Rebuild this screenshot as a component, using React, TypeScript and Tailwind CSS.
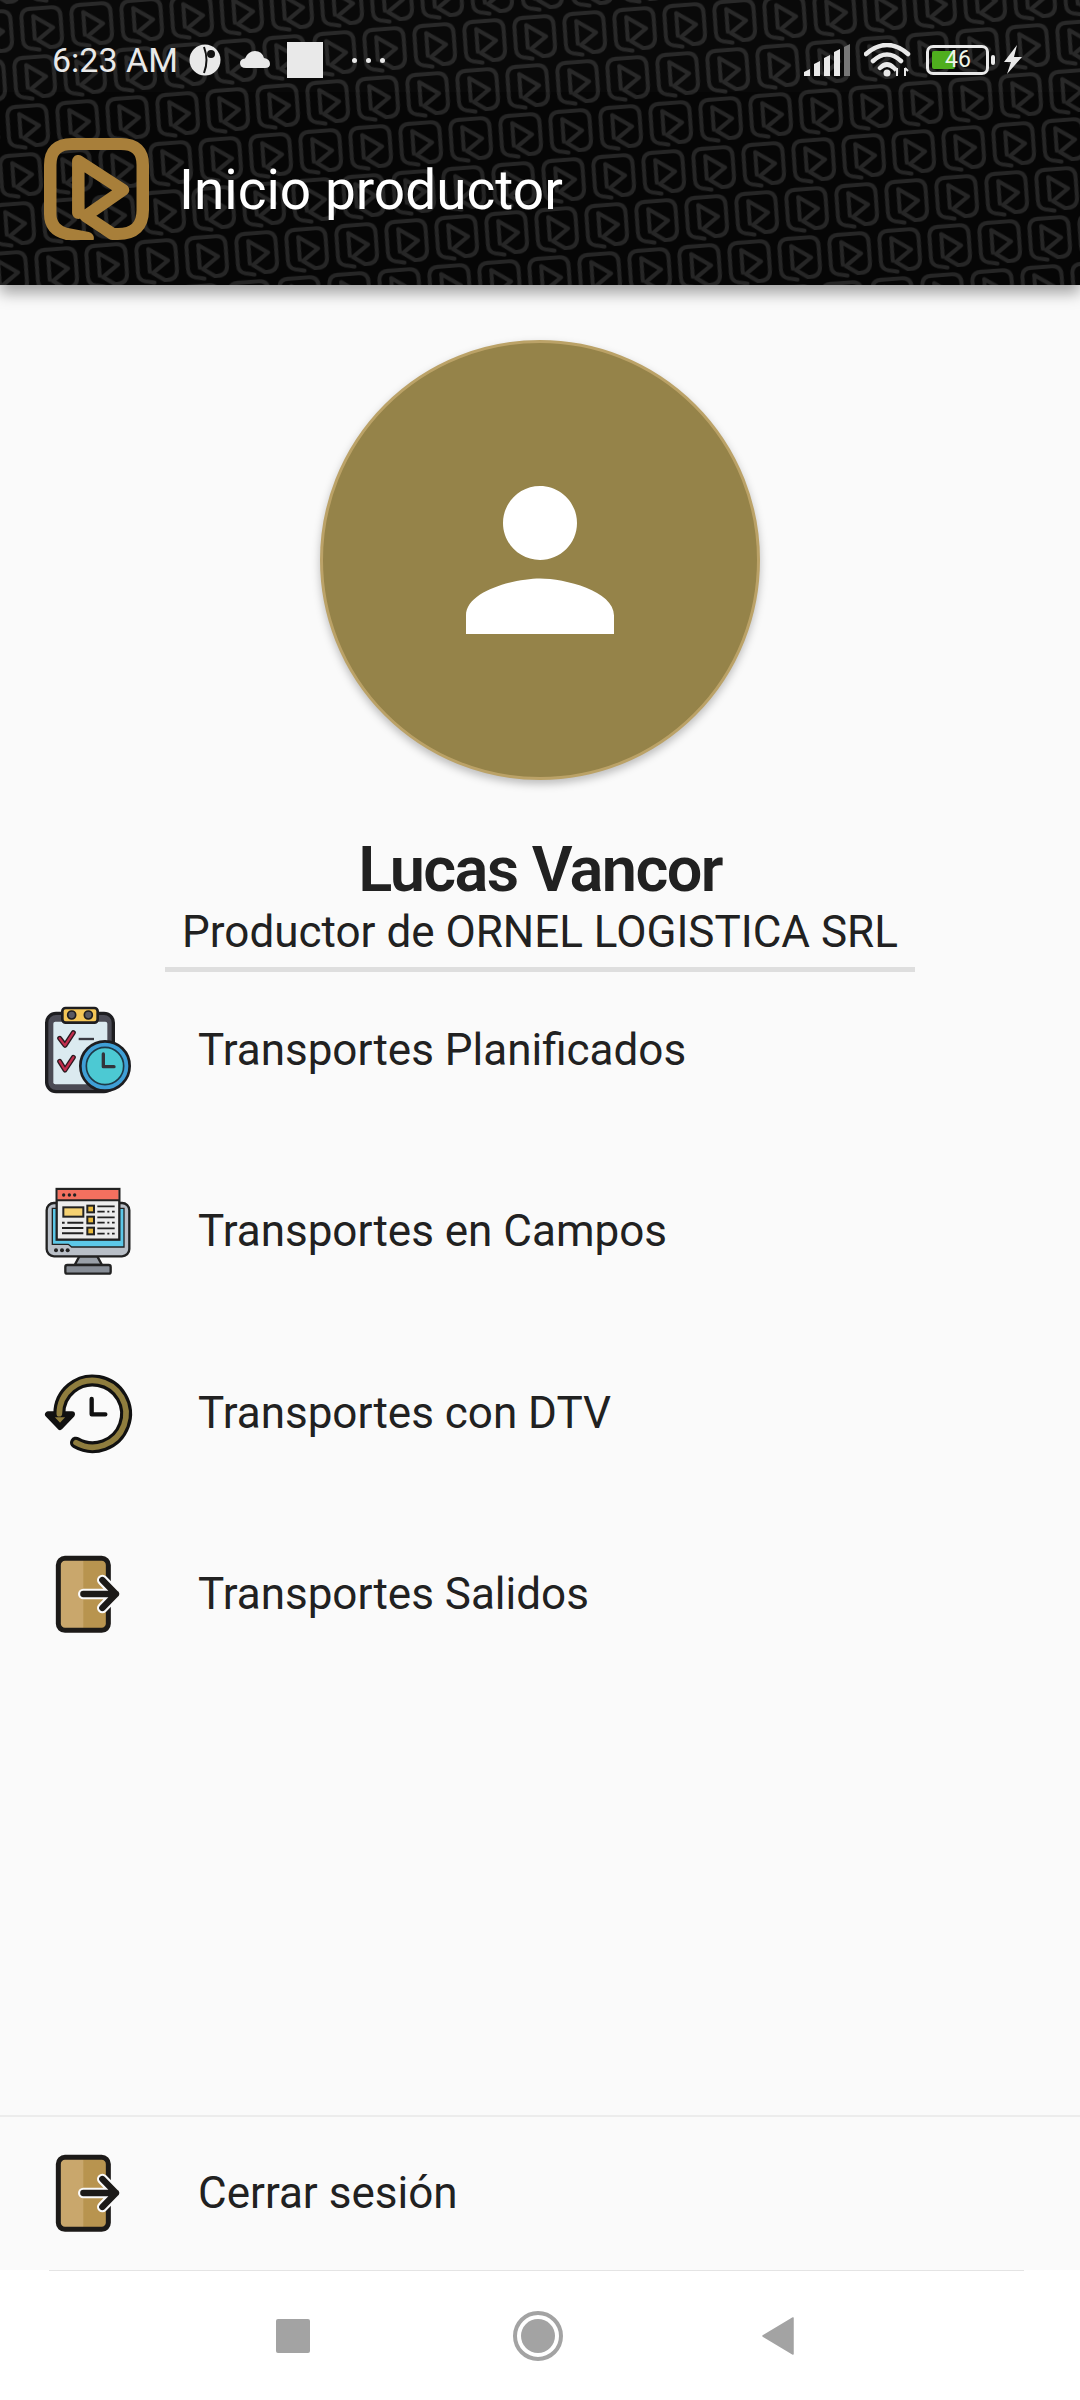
const LOGO_PATH = 'M42 100 L22 96 Q6 92 6 76 V27 Q6 6 27 6 H74 Q95 6 95 27 V72 Q95 96 71 96 H66 L40 78 L76 52 L33 23 V75';

function ClipboardIcon() {
  return (
    <svg viewBox="0 0 420 420" className="w-[140px] h-[140px] shrink-0">
      <rect x="80" y="100" width="200" height="235" rx="28" fill="#4b4b55" stroke="#1d1d20" strokeWidth="10" />
      <rect x="100" y="125" width="162" height="188" rx="6" fill="#dbeaf0" />
      <rect x="127" y="84" width="106" height="44" rx="10" fill="#f4c656" stroke="#1d1d20" strokeWidth="8" />
      <circle cx="155" cy="105" r="12" fill="#5a5a62" stroke="#1d1d20" strokeWidth="5" />
      <circle cx="205" cy="105" r="12" fill="#5a5a62" stroke="#1d1d20" strokeWidth="5" />
      <path d="M119 175 L135 196 L160 158 M119 244 L135 270 L160 232" fill="none" stroke="#2a1a20" strokeWidth="15" strokeLinecap="round" strokeLinejoin="round" />
      <path d="M119 175 L135 196 L160 158 M119 244 L135 270 L160 232" fill="none" stroke="#c22d4d" strokeWidth="7" strokeLinecap="round" strokeLinejoin="round" />
      <path d="M176 177 H222" stroke="#3a3a42" strokeWidth="7" />
      <circle cx="255" cy="258" r="74" fill="#3f9fd6" stroke="#1d1d20" strokeWidth="8" />
      <circle cx="255" cy="258" r="56" fill="#4cc9d3" stroke="#1d3a48" strokeWidth="5" />
      <path d="M250 222 V260 H282" fill="none" stroke="#33333a" strokeWidth="10" strokeLinecap="round" strokeLinejoin="round" />
    </svg>
  );
}

function MonitorIcon() {
  return (
    <svg viewBox="0 4 420 420" className="w-[140px] h-[140px] shrink-0">
      <path d="M178 290 H232 L246 316 H164 Z" fill="#9aa0a8" stroke="#222" strokeWidth="7" strokeLinejoin="round" />
      <rect x="136" y="316" width="136" height="26" rx="6" fill="#878d96" stroke="#222" strokeWidth="7" />
      <rect x="80" y="130" width="248" height="160" rx="22" fill="#b9bfc7" stroke="#222" strokeWidth="7" />
      <path d="M97 146 H312 V262 H155 L145 254 H97 Z" fill="#5cc8e8" stroke="#222" strokeWidth="4" />
      <circle cx="108" cy="272" r="6" fill="#222" />
      <circle cx="126" cy="272" r="6" fill="#222" />
      <circle cx="143" cy="272" r="6" fill="#222" />
      <rect x="110" y="88" width="188" height="152" fill="#ececec" stroke="#222" strokeWidth="7" />
      <rect x="113" y="91" width="182" height="31" fill="#f4705f" />
      <path d="M110 122 H298" stroke="#222" strokeWidth="6" />
      <circle cx="131" cy="106" r="5" fill="#222" />
      <circle cx="148" cy="106" r="5" fill="#222" />
      <circle cx="164" cy="106" r="5" fill="#222" />
      <rect x="130" y="143" width="60" height="28" fill="#f6d272" stroke="#222" strokeWidth="6" />
      <rect x="202" y="138" width="20" height="20" fill="#e8b93c" stroke="#222" strokeWidth="6" />
      <rect x="202" y="171" width="20" height="20" fill="#e8b93c" stroke="#222" strokeWidth="6" />
      <rect x="202" y="204" width="20" height="20" fill="#e8b93c" stroke="#222" strokeWidth="6" />
      <path d="M232 156 H254 M262 156 H268 M276 156 H284 M232 189 H254 M262 189 H268 M276 189 H284 M232 222 H254 M262 222 H268 M276 222 H284 M232 140 H284 M232 173 H284 M232 206 H284" stroke="#222" strokeWidth="5" />
      <path d="M126 189 H134 M142 189 H190 M126 205 H190 M126 221 H190" stroke="#222" strokeWidth="6" />
    </svg>
  );
}

function HistoryIcon() {
  return (
    <svg viewBox="0 6 420 420" className="w-[140px] h-[140px] shrink-0">
      <path d="M168 305 A100 100 0 1 0 118 218" fill="none" stroke="#111" strokeWidth="36" strokeLinecap="round" />
      <path d="M84 220 H156 L120 258 Z" fill="#8f7d3e" stroke="#111" strokeWidth="18" strokeLinejoin="round" />
      <path d="M168 305 A100 100 0 1 0 118 218" fill="none" stroke="#8f7d3e" strokeWidth="17" strokeLinecap="round" />
      <path d="M215 174 V220 H256" fill="none" stroke="#111" strokeWidth="13" strokeLinecap="round" strokeLinejoin="round" />
    </svg>
  );
}

function DoorIcon() {
  return (
    <svg viewBox="0 12 420 420" className="w-[140px] h-[140px] shrink-0">
      <rect x="115" y="115" width="150" height="216" rx="20" fill="#c9a76c" />
      <path d="M190 115 H245 Q265 115 265 135 V311 Q265 331 245 331 H190 Z" fill="#b8944f" />
      <rect x="115" y="115" width="150" height="216" rx="20" fill="none" stroke="#1c1a18" strokeWidth="15" />
      <path d="M190 222 H288 M247 180 L288 222 L247 264" fill="none" stroke="#fafafa" strokeWidth="32" strokeLinecap="round" strokeLinejoin="round" />
      <path d="M190 222 H288 M247 180 L288 222 L247 264" fill="none" stroke="#1c1a18" strokeWidth="19" strokeLinecap="round" strokeLinejoin="round" />
    </svg>
  );
}

const menuItems = [
  { label: 'Transportes Planificados', icon: <ClipboardIcon /> },
  { label: 'Transportes en Campos', icon: <MonitorIcon /> },
  { label: 'Transportes con DTV', icon: <HistoryIcon /> },
  { label: 'Transportes Salidos', icon: <DoorIcon /> },
];

function MenuRow({ label, icon }: { label: string; icon: React.ReactNode }) {
  return (
    <div className="flex items-center h-[140px] pl-[20px]">
      {icon}
      <span className="ml-[38px] text-[44px] leading-none text-[#212121]">{label}</span>
    </div>
  );
}

// tile lattice is skewed, the glyph inside is un-skewed so it stays upright
const TILE_WRAP = [
  [0, 0],
  [-50, 0],
  [0, -50],
  [-50, -50],
];

function HeaderPattern() {
  return (
    <svg className="absolute inset-0 w-full h-full" aria-hidden="true">
      <defs>
        <pattern id="logo-tile" width="50" height="50" patternUnits="userSpaceOnUse" patternTransform="matrix(1 -0.08 -0.14 0.98 18 7)">
          {TILE_WRAP.map(([x, y]) => (
            <g key={`${x}${y}`} transform={`matrix(0.44 0.0046 0.0945 0.4555 ${x} ${y})`} fill="none" stroke="#262626" strokeWidth="9" strokeLinecap="round" strokeLinejoin="round">
              <path d={LOGO_PATH} />
            </g>
          ))}
        </pattern>
      </defs>
      <rect width="100%" height="100%" fill="#060606" />
      <rect width="100%" height="100%" fill="url(#logo-tile)" />
    </svg>
  );
}

function StatusBar() {
  return (
    <div className="relative flex items-center justify-between h-[36px] pl-[52px] pr-[57px] text-[#e9e9e9]">
      <div className="flex items-center">
        <span className="text-[34px] leading-none">6:23 AM</span>
        <svg viewBox="0 0 32 32" className="w-[32px] h-[32px] ml-[11px]">
          <circle cx="16" cy="16" r="15.5" fill="#e9e9e9" />
          <path d="M15 3 Q20 16 15 29" fill="none" stroke="#111" strokeWidth="2" />
          <circle cx="22" cy="10" r="4" fill="#111" />
        </svg>
        <svg viewBox="0 0 32 20" className="w-[32px] h-[20px] ml-[18px]">
          <path d="M7 18 Q1 18 1 13 Q1 9 6 8.5 Q9 1 16 1 Q23 1 25 8 Q31 9 31 14 Q31 18 26 18 Z" fill="#e9e9e9" />
        </svg>
        <div className="w-[36px] h-[36px] ml-[16px] bg-[#e9e9e9]" />
        <div className="flex gap-[9px] ml-[29px]">
          <div className="w-[5px] h-[5px] rounded-full bg-[#e9e9e9]" />
          <div className="w-[5px] h-[5px] rounded-full bg-[#e9e9e9]" />
          <div className="w-[5px] h-[5px] rounded-full bg-[#e9e9e9]" />
        </div>
      </div>
      <div className="flex items-center">
        <svg viewBox="0 0 48 32" className="w-[48px] h-[32px]">
          <path d="M1 32 V28 L7 25 V32 Z M11 32 V20 L17 17 V32 Z M21 32 V14 L27 11 V32 Z M31 32 V8 L37 5 V32 Z" fill="#e9e9e9" />
          <path d="M41 32 V3 L47 0 V32 Z" fill="#777" />
        </svg>
        <svg viewBox="0 0 48 34" className="w-[48px] h-[34px] ml-[13px]">
          <path d="M2 11 Q23 -7 44 11 M9 18 Q23 5 37 18 M16 25 Q23 18 30 25" fill="none" stroke="#e9e9e9" strokeWidth="4.5" strokeLinecap="round" />
          <circle cx="23" cy="30" r="3.5" fill="#e9e9e9" />
          <path d="M33 33 V25 M33 25 L30 28 M41 25 V33 M41 25 L44 28" fill="none" stroke="#e9e9e9" strokeWidth="2" />
        </svg>
        <div className="relative flex items-center w-[63px] h-[30px] ml-[14px] rounded-[7px] border-[3px] border-[#e9e9e9] p-[3px]">
          <div className="w-[23px] h-full rounded-[2px] bg-[#4fae1e]" />
          <span className="absolute left-[16px] top-0 text-[23px] leading-[24px] text-[#eef5e8]">46</span>
        </div>
        <div className="w-[4px] h-[10px] ml-[2px] rounded-full bg-[#e9e9e9]" />
        <svg viewBox="0 0 20 30" className="w-[20px] h-[30px] ml-[8px]">
          <path d="M14 0 L1 17 H8 L4 29 L19 12 H11 Z" fill="#e9e9e9" />
        </svg>
      </div>
    </div>
  );
}

export default function App() {
  return (
    <div className="flex flex-col h-[2400px] w-[1080px] bg-[#fafafa] overflow-hidden font-['Roboto',sans-serif]">
      <header className="relative h-[285px] shrink-0 pt-[42px] shadow-[0_8px_14px_rgba(0,0,0,0.35)] z-10">
        <HeaderPattern />
        <div className="absolute inset-x-0 top-0 h-[92px] bg-white/[0.015]" />
        <StatusBar />
        <div className="relative flex items-center mt-[60px] pl-[44px]">
          <svg viewBox="0 0 101 102" preserveAspectRatio="none" className="w-[105px] h-[102px]">
            <path d={LOGO_PATH} fill="none" stroke="#a87f3a" strokeWidth="12" strokeLinecap="round" strokeLinejoin="round" />
          </svg>
          <h1 className="ml-[30px] pt-[3px] text-[55px] leading-none text-white">Inicio productor</h1>
        </div>
      </header>

      <main className="flex flex-col flex-1">
        <div className="flex flex-col items-center pt-[55px]">
          <div className="flex items-center justify-center w-[440px] h-[440px] rounded-full bg-[#958349] border-[3px] border-[#bba267] shadow-[0_4px_8px_rgba(0,0,0,0.25)]">
            <svg viewBox="0 0 24 24" className="w-[222px] h-[222px]" fill="#ffffff">
              <path d="M12 12c2.21 0 4-1.79 4-4s-1.79-4-4-4-4 1.79-4 4 1.79 4 4 4zm0 2c-2.67 0-8 1.34-8 4v2h16v-2c0-2.66-5.33-4-8-4z" />
            </svg>
          </div>
          <p className="mt-[54px] text-[63px] leading-[72px] font-semibold tracking-[-1.6px] text-[#212121]">Lucas Vancor</p>
          <p className="pt-[1px] text-[44px] leading-[50px] text-[#212121]">Productor de ORNEL LOGISTICA SRL</p>
          <div className="w-[750px] h-[5px] mt-[10px] bg-[#dedede]" />
        </div>

        <nav className="flex flex-col gap-[41.5px] pt-[7.5px]">
          {menuItems.map((item) => (
            <MenuRow key={item.label} label={item.label} icon={item.icon} />
          ))}
        </nav>

        <div className="mt-auto border-t-2 border-[#ececec] h-[155px] pb-[2px] flex items-center">
          <MenuRow label="Cerrar sesión" icon={<DoorIcon />} />
        </div>
      </main>

      <footer className="h-[130px] shrink-0 bg-white">
        <div className="h-[1px] ml-[49px] mr-[56px] bg-[#e4e4e4]" />
        <div className="flex items-center pt-[40px] pl-[276px]">
          <div className="w-[34px] h-[34px] rounded-[2px] bg-[#a3a3a3]" />
          <div className="flex items-center justify-center w-[50px] h-[50px] ml-[203px] rounded-full border-[4px] border-[#a3a3a3]">
            <div className="w-[34px] h-[34px] rounded-full bg-[#a3a3a3]" />
          </div>
          <svg viewBox="0 0 32 38" className="w-[32px] h-[38px] ml-[199px]">
            <path d="M31 1 V37 L1 19 Z" fill="#a3a3a3" stroke="#a3a3a3" strokeWidth="1.5" strokeLinejoin="round" />
          </svg>
        </div>
      </footer>
    </div>
  );
}
